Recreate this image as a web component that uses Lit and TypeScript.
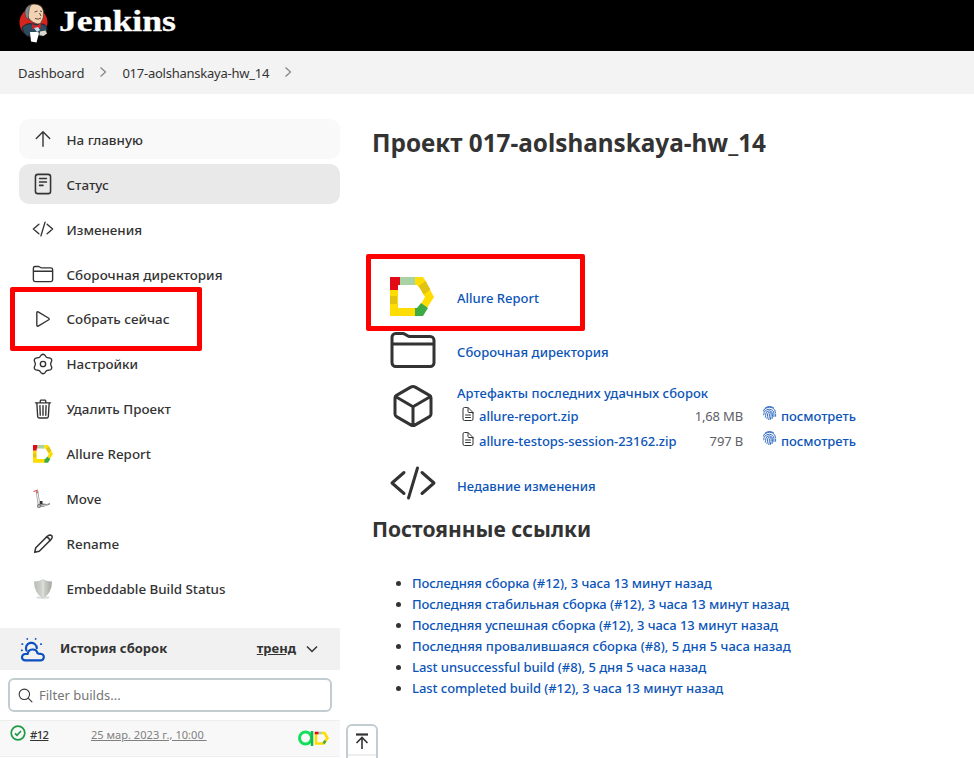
import { LitElement, html, css, svg } from "lit";
import { customElement } from "lit/decorators.js";

const stroke = (w: number, body: unknown, cls = "") => html`<svg class="ico ${cls}" viewBox="0 0 512 512" fill="none" stroke="currentColor" stroke-width=${w} stroke-linecap="round" stroke-linejoin="round">${body}</svg>`;

const code = svg`<path d="M160 368L32 256l128-112M352 368l128-112-128-112M304 96l-96 320"/>`;
const folder = svg`<path d="M440 432H72a40 40 0 01-40-40V120a40 40 0 0140-40h75.89a40 40 0 0122.19 6.72l27.84 18.56a40 40 0 0022.19 6.72H440a40 40 0 0140 40v240a40 40 0 01-40 40zM32 192h448"/>`;
const up = svg`<path d="M100 244l156-156 156 156M256 96v330"/>`;
const play = svg`<path d="M112 111v290c0 17.44 17 28.52 31 20.16l247.9-148.37c12.12-7.25 12.12-26.33 0-33.58L143 90.84c-14-8.36-31 2.72-31 20.16z"/>`;
const trash = svg`<path d="M112 112l20 320c.95 18.49 14.4 32 32 32h184c17.67 0 30.87-13.51 32-32l20-320M80 112h352M192 112V72a23.93 23.93 0 0124-24h80a23.93 23.93 0 0124 24v40M256 176v224M184 176l8 224M328 176l-8 224"/>`;
const cube = svg`<path d="M448 341.37V170.61A32 32 0 00432.11 143l-152-88.46a47.94 47.94 0 00-48.24 0L79.89 143A32 32 0 0064 170.61v170.76A32 32 0 0079.89 369l152 88.46a48 48 0 0048.24 0l152-88.46A32 32 0 00448 341.37zM69 154l187 110 187-110M256 464V264"/>`;
const status = svg`<rect x="80" y="32" width="352" height="448" rx="56"/><path d="M176 128h160M176 208h160M176 288h80"/>`;
// Cog outline: a circle whose radius swells six times per turn.
const cog = Array.from({ length: 72 }, (_, i) => {
  const a = (i / 72) * Math.PI * 2;
  const r = 202 + 24 * Math.cos(6 * a);
  return `${(256 + r * Math.sin(a)).toFixed(1)},${(256 - r * Math.cos(a)).toFixed(1)}`;
}).join(" ");
const gear = svg`<polygon points=${cog}/><circle cx="256" cy="256" r="62"/>`;
const pencil = svg`<path d="M62 450l26-106L350 82q34-32 66-36 28 2 40 14 14 16 12 42-4 30-36 62L168 424z"/><path d="M334 98q60-6 82 80"/>`;
const search = svg`<path d="M221 64a157 157 0 10157 157A157 157 0 00221 64zM338 338L450 450"/>`;
const doc = svg`<path d="M416 221v195a48 48 0 01-48 48H144a48 48 0 01-48-48V96a48 48 0 0148-48h99a32 32 0 0123 9l141 141a32 32 0 019 23zM256 56v120a32 32 0 0032 32h120M176 288h160M176 368h160"/>`;

const allure = (cls: string) => html`<svg class="ico ${cls}" viewBox="0 0 44 40"><path fill="#e20a17" d="M0 0h10v8H8v5H0z"/><path fill="#a8d3a5" d="M10 0h15v8H10z"/><path fill="#ffdd00" d="M25 0h8l4 6-7 5-3-3h-2zM0 13h8v18h18v8H0zM39 11l5 9-7 11-6-4 4-7-3-5z"/><path fill="#e2c312" d="M35.500 4l5 8.500-7 5-5-8.500zM0 19h7v8H0z"/><path fill="#3dab45" d="M25 31h2l4-5 7 5-5 8h-8z"/></svg>`;

const butler = html`<svg class="butler" viewBox="0 0 36 46">
<ellipse cx="17.500" cy="22.500" rx="14" ry="14.500" fill="#d6251f"/>
<path d="M6 27.500q5-5 10-3.500h9q6 0 6 5l-1 5-4 2H11q-4-3-5-8.500z" fill="#2d4b5e" stroke="#17222b" stroke-width="1"/>
<path d="M10 11q1-7 8-7 8 0 9.500 7 1 7-3 12.500-3 1.500-7-1-6-3-7.500-11.500z" fill="#f1d3b4" stroke="#3c2c25" stroke-width=".7"/>
<path d="M9 14q-1-7 6.500-9.500Q12.500 8 13 11q-1 4-.500 8.500Q9.500 18.500 9 14z" fill="#81898b" stroke="#373737" stroke-width=".6"/>
<path d="M18.500 12l3-1M24 11l2 .5M19 18.500q3.500 1.500 6-.5M23.500 13l1.500 3" stroke="#55372c" stroke-width=".9" fill="none"/>
<path d="M16 24l4.500 2L25 23l-.5 5.500-4-1.500-4 2.500z" fill="#e21e25"/><path d="M18 28l3 4 3-2-2-3z" fill="#c9dce6"/>
<path d="M14 32l7.500 0 1.500 1-2.500 9.500-5.500-1z" fill="#fff"/><path d="M24 31.500l5.500-1 1.500 3-3.500 2.500-4-1z" fill="#ddd6cc"/></svg>`;

const scooter = html`<svg class="ico" viewBox="0 0 22 22"><path d="M5 3l2 14" stroke="#999" stroke-width="2.500"/><path d="M5 4l2 12" stroke="#eee" stroke-width="1.200"/><path d="M1.500 3.500l4.500-1.500M4 5l2-.5" stroke="#e25555" stroke-width="1.200"/><path d="M6 18l2-3 7 1 3-1v1.500L11 19H6z" fill="#888"/><path d="M8 13h2.500v3H8z" fill="#333"/><circle cx="7" cy="18" r="2" fill="#777"/><circle cx="7" cy="18" r=".8" fill="#eee"/><path d="M9 18l7-1" stroke="#ccc"/></svg>`;
const shield = html`<svg class="ico" viewBox="0 0 22 22"><defs><linearGradient id="s"><stop stop-color="#b9bdb6"/><stop offset=".5" stop-color="#d3d7cf"/><stop offset="1" stop-color="#a2a69e"/></linearGradient></defs><ellipse cx="11" cy="19.500" rx="7" ry="1.300" fill="#ddd"/><path d="M11 1q3 2 9 2.500Q20 15 11 20.500 2 15 2 3.500 8 3 11 1z" fill="url(#s)"/><path d="M11 3v16" stroke="#eee" stroke-width=".7"/></svg>`;
const finger = html`<svg class="print" viewBox="0 0 16 16" fill="none" stroke="#2b66bf" stroke-width="1" stroke-linecap="round"><path d="M3.500 2.600Q8-.8 12.500 2.600M1.500 6Q2 3 5 2.500 8 1.200 11 2.500 14.500 4 14.500 8M1.800 10Q2 4 8 4q4.500.5 4.700 4.500V12M3.500 12.500Q4 11 4 9q.2-3.300 4-3.400 3.200.2 3.300 4 0 2-.6 4.400M5.300 14Q6 12 6 9q.3-1.800 2-1.800T9.800 9q0 3-1 6M7.200 15Q8 12 8 9M14.500 9.500v2"/></svg>`;
const weather = html`<svg class="weather" viewBox="0 0 24 24" fill="none" stroke="#0b4fc0" stroke-width="2.100" stroke-linecap="round" stroke-linejoin="round"><path d="M5 22.500h14.500a3.200 3.200 0 0 0 .3-6.400Q18.500 16.300 16.800 15.500a4.800 4.800 0 0 0-9.400.8H5a3.100 3.100 0 0 0 0 6.200z"/><path d="M6.200 13a5.200 5.200 0 1 1 9.900-2.200"/><path stroke-width="1.700" d="M7 1.800v.1M15 1.800v.1M2 6.800h.4M20 6.800h.4M1.600 12.800h.4"/></svg>`;

const tasks = [
  ["На главную", "t-home", stroke(32, up)],
  ["Статус", "t-status", stroke(36, status)],
  ["Изменения", "t-changes", stroke(32, code)],
  ["Сборочная директория", "t-workspace", stroke(32, folder)],
  ["Собрать сейчас", "t-run", stroke(32, play)],
  ["Настройки", "t-settings", stroke(32, gear)],
  ["Удалить Проект", "t-delete", stroke(32, trash)],
  ["Allure Report", "t-allure", allure("small")],
  ["Move", "t-move", scooter],
  ["Rename", "t-rename", stroke(36, pencil)],
  ["Embeddable Build Status", "t-badge", shield],
] as const;

const permalinks = [
  "Последняя сборка (#12), 3 часа 13 минут назад",
  "Последняя стабильная сборка (#12), 3 часа 13 минут назад",
  "Последняя успешная сборка (#12), 3 часа 13 минут назад",
  "Последняя провалившаяся сборка (#8), 5 дня 5 часа назад",
  "Last unsuccessful build (#8), 5 дня 5 часа назад",
  "Last completed build (#12), 3 часа 13 минут назад",
];

@customElement("app-root")
export class AppRoot extends LitElement {
  static styles = css`
    :host { display: block; position: relative; width: 974px; height: 758px; overflow: hidden; background: #fff; color: #333; font: 500 13px/20px "Noto Sans", "Open Sans", sans-serif; }
    * { box-sizing: border-box; }
    svg { display: block; flex: none; }
    .top { display: flex; height: 51px; background: #000; padding-left: 16px; color: #fff; }
    .butler { width: 36px; height: 46px; }
    .word { font: bold 29px/42px "Liberation Serif", serif; margin-left: 7px; transform: scaleX(1.23); transform-origin: left; -webkit-text-stroke: .3px #fff; }
    .crumbs { display: flex; align-items: center; height: 43px; background: #f3f3f3; padding-left: 18px; font-weight: 400; }
    .crumbs svg { width: 8px; height: 12px; margin: -2px 15px 0; color: #888; }
    .c1 { letter-spacing: -.1px; }
    .c2 { letter-spacing: -.24px; }
    .body { display: flex; }
    .side { width: 340px; padding-top: 25px; }
    .task { display: flex; align-items: center; height: 40px; margin: 0 0 5px 19px; padding-left: 13px; border-radius: 10px; font-size: 13.4px; }
    .task span { margin: 2px 0 0 12.5px; white-space: nowrap; }
    .task:nth-child(n+5) span { margin-top: 0; }
    .t-home { background: #f9f9f9; }
    .t-status { background: #e9e9e9; }
    .t-badge { letter-spacing: -.04px; }
    .t-workspace { letter-spacing: .04px; }
    .ico { width: 22px; height: 22px; }
    .small { padding: 1px; }
    .history { display: flex; align-items: center; height: 42px; margin-top: 19px; background: #f1f1f1; padding: 0 22px 0 20px; font-weight: 700; }
    .weather { width: 25px; height: 25px; margin-right: 15px; }
    .history span { margin-top: -3px; }
    .history .trend { margin-left: auto; text-decoration: underline; }
    .history .chev { width: 12px; height: 8px; margin-left: 10px; }
    .filter { display: flex; align-items: center; height: 34px; margin: 8px 8px 8px 8px; border: 2px solid #c3ccd1; border-radius: 6px; padding-left: 7px; font-weight: 400; font-size: 13px; color: #757575; }
    .filter .ico { width: 17px; height: 17px; margin-right: 5px; color: #333; }
    .build { display: flex; align-items: center; height: 37px; background: #f8f8f8; border-top: 1px solid #eee; border-bottom: 1px solid #eee; padding: 0 11px 8px 10px; font: 400 12px/20px "Noto Sans", sans-serif; }
    .build u { white-space: pre; }
    .build .num { font-size: 11.3px; font-weight: 500; width: 18px; letter-spacing: -.6px; }
    .ok { width: 16px; height: 16px; margin: -3px 4px 0 0; }
    .build .date { color: #808080; margin-left: 43px; font-size: 11.1px; }
    .pair { display: flex; margin: 6px 0 0 auto; }
    .main { padding: 34px 0 0 32px; }
    h1 { margin: 0; font: 700 24.3px/30px "Noto Sans", sans-serif; white-space: nowrap; }
    h2 { margin: 8px 0 0; font: 700 21px/28px "Noto Sans", sans-serif; }
    .links { display: grid; grid-template-columns: 48px 1fr; grid-template-rows: 54px 54px 81px 48px; column-gap: 20px; align-items: center; margin-top: 112px; padding-left: 17px; color: #0b54b8; white-space: nowrap; }
    .links > span { margin-top: 2px; }
    .links .l4 { margin-top: 6px; }
    .links .l2, .links .l3 { letter-spacing: .05px; }
    .links > .ico { width: 48px; height: 48px; color: #333; margin-top: -3px; }
    .links > .cubed { align-self: start; margin-top: 4px; }
    .links > .coded { margin-top: 0; }
    .links > .mark { width: 44px; height: 40px; margin: 0 0 0 1px; }
    .art { align-self: start; padding-top: 5px; }
    .files { display: grid; grid-template-columns: 22px 214px 50px 38px auto; justify-content: start; align-items: center; line-height: 25px; margin-top: 1px; letter-spacing: -.03px; }
    .files .ico { width: 16px; height: 16px; margin: -5px 0 0 3px; color: #333; }
    .size { color: #5c6066; font-weight: 400; text-align: right; letter-spacing: -.15px; }
    .print { width: 15px; height: 16px; margin: -7px 0 0 19px; }
    ul { margin: 30px 0 0; padding: 0 0 0 40px; line-height: 21px; color: #333; letter-spacing: -.05px; }
    li:nth-child(4) { letter-spacing: .02px; }
    li span { color: #0b54b8; }
    .box { position: absolute; border: 5px solid #f00; border-radius: 2px; }
    .b1 { left: 10px; top: 287px; width: 192px; height: 64px; }
    .b2 { left: 366px; top: 254px; width: 219px; height: 77px; }
    .totop { position: absolute; left: 346px; top: 724px; width: 32px; height: 40px; border: 2px solid #c3ccd1; border-radius: 6px; background: linear-gradient(#fff 28px, #eee 28px, #eee 30px, #fff 30px); padding: 5px 0 0 5px; }
    .totop svg { width: 18px; height: 20px; }
  `;

  render() {
    const chev = html`<svg viewBox="0 0 8 12" fill="none" stroke="currentColor" stroke-width="1.300"><path d="M1.500 1.500L6.500 6l-5 4.500"/></svg>`;
    const file = (name: string, size: string) => html`${stroke(32, doc)}<span>${name}</span><span class="size">${size}</span>${finger}<span>посмотреть</span>`;
    return html`
      <header class="top">${butler}<span class="word">Jenkins</span></header>
      <nav class="crumbs"><span class="c1">Dashboard</span>${chev}<span class="c2">017-aolshanskaya-hw_14</span>${chev}</nav>
      <div class="body">
        <aside class="side">
          ${tasks.map(([label, cls, icon]) => html`<div class="task ${cls}">${icon}<span>${label}</span></div>`)}
          <div class="history">${weather}<span>История сборок</span><span class="trend">тренд</span>
            <svg class="chev" viewBox="0 0 12 8" fill="none" stroke="#333" stroke-width="1.500"><path d="M1 1.500l5 5 5-5"/></svg></div>
          <div class="filter">${stroke(32, search)}<span>Filter builds...</span></div>
          <div class="build">
            <svg class="ok" viewBox="0 0 16 16" fill="none" stroke="#1e9a44" stroke-width="1.700"><circle cx="8" cy="8" r="6.800"/><path d="M5 8.300l2 2 4-4.300"/></svg>
            <u class="num">#12</u><u class="date">25 мар. 2023 г., 10:00 </u>
            <svg class="pair" width="31" height="16" viewBox="0 0 31 16"><circle cx="7.500" cy="8" r="6" fill="none" stroke="#12e05b" stroke-width="3"/><path d="M14 1v15" stroke="#12b84e" stroke-width="2.600"/><g fill="none" stroke-width="2.600"><path d="M18 3v10.500h7.500l4-5.500-3-5h-3" stroke="#ffdd00"/><path d="M16.700 3h4" stroke="#e20a17"/><path d="M20.700 3h3" stroke="#a8d3a5"/><path d="M25.500 13.500l2-2.800" stroke="#3dab45"/></g></svg>
          </div>
        </aside>
        <main class="main">
          <h1>Проект 017-aolshanskaya-hw_14</h1>
          <div class="links">
            ${allure("mark")}<span class="l1">Allure Report</span>
            ${stroke(32, folder)}<span class="l2">Сборочная директория</span>
            ${stroke(32, cube, "cubed")}<div class="art"><span class="l3">Артефакты последних удачных сборок</span>
              <div class="files">${file("allure-report.zip", "1,68 MB")}${file("allure-testops-session-23162.zip", "797 B")}</div></div>
            ${stroke(32, code, "coded")}<span class="l4">Недавние изменения</span>
          </div>
          <h2>Постоянные ссылки</h2>
          <ul>${permalinks.map((p) => html`<li><span>${p}</span></li>`)}</ul>
        </main>
      </div>
      <div class="box b1"></div><div class="box b2"></div>
      <div class="totop"><svg viewBox="0 0 18 20" fill="none" stroke="#333" stroke-width="1.600"><path d="M3 3.500h12" stroke-width="2.200"/><path d="M9 18V7M3.500 12L9 6.500l5.500 5.500"/></svg></div>
    `;
  }
}
